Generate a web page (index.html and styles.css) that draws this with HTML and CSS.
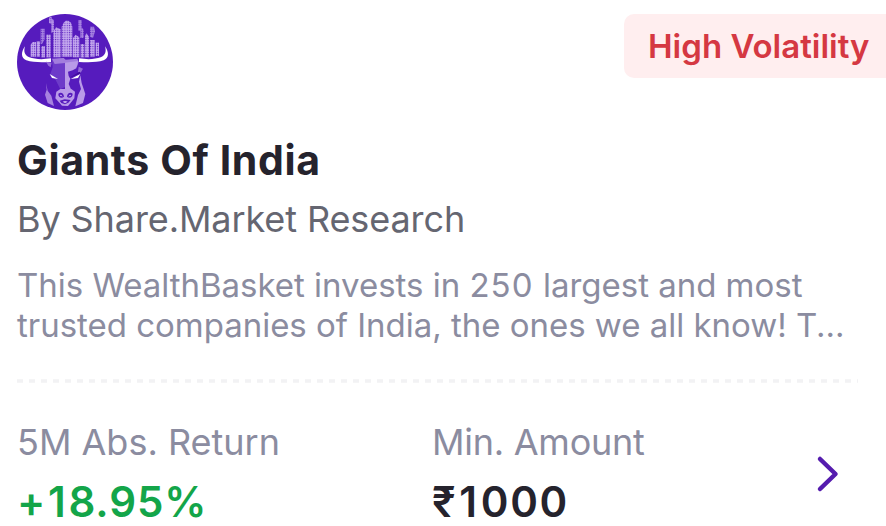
FILE: index.html
```html
<!DOCTYPE html>
<html lang="en">
<head>
<meta charset="utf-8">
<title>Giants Of India</title>
<link rel="stylesheet" href="styles.css">
</head>
<body>
<article class="card">
  <header class="top">
    <svg class="logo" viewBox="21 18 288 288" aria-hidden="true">
      <defs>
        <pattern id="windows" width="7" height="7" patternUnits="userSpaceOnUse">
          <rect width="7" height="7" fill="#c9aff1"/>
          <rect x="2" y="2" width="3.500" height="3.500" fill="#6b35c6"/>
        </pattern>
      </defs>
      <circle cx="165" cy="162" r="144" fill="#561bbd"/>
      <g fill="url(#windows)">
        <path d="M62 146v-36l6-8h10v44z"/>
        <path d="M80 146v-46h10v46z"/>
        <path d="M94 148v-34h11v34z"/>
        <path d="M92 62h12v32l-8 14h-4z" opacity=".75"/>
        <path d="M109 148V80h13v68z"/>
        <path d="M117 30l6-6 4 10 5 2v34l-8 6V48l-7-3z" opacity=".85"/>
        <path d="M130 148V70l8-12 14 6v84z"/>
        <path d="M155 146V56l6-12 6-6h8l8 6 4 12v90z"/>
        <path d="M189 148V90l8-10 11 8v60z"/>
        <path d="M205 36h10v22l6 8v24h-10V68h-6z" opacity=".75"/>
        <path d="M212 148v-40h11v40z"/>
        <path d="M225 148V84l4-8 8 10v62z"/>
        <path d="M240 56h12l3 14-6 20-9-4z" opacity=".75"/>
        <path d="M240 146V96h14v50z"/>
        <path d="M257 144v-40h10v40z"/>
      </g>
      <g fill="#fff">
        <path d="M45 115C32 133 33 151 49 157c20 7 49 6 74 5v-11c-25 4-49 3-65-3-14-6-18-17-13-33z"/>
        <path d="M285 115c13 18 12 36-4 42-20 7-49 6-74 5v-11c25 4 49 3 65-3 14-6 18-17 13-33z"/>
      </g>
      <path d="M126 154l34-3 5 4v82l-14 7-14-28-16-18 7-20z" fill="#6d3bc9"/>
      <path d="M126 152l35-2 6 5 35-3 4 9-5 15-34 2-2-13-31 3z" fill="#a27ddd"/>
      <path d="M165 164l39-5-5 22-11 6-14 4 2 13 5 8-5 16 7 16-18-1z" fill="#b99ae8"/>
      <path d="M108 161l17 3-3 14-7-5zM206 176l13 6-7 12-8-2z" fill="#9369d6"/>
      <path d="M119 198l25 15-18-3z" fill="#fff"/>
      <path d="M211 198l-29 15 22-3z" fill="#fff"/>
      <path d="M178 209l31-18 3 5-29 12z" fill="#3f0c9b"/>
      <path d="M108 225l5 23 11 15 8 31-19-9-8-25 5-15z" fill="#a681df"/>
      <path d="M211 202l4 23 11 33-7 27-23 10 8-34 9-18-6-22z" fill="#b99ae8"/>
      <path d="M139 251l12-8h33l11 8-2 20-12 15-7 8-18-1-7-8-13-14z" fill="#b99ae8"/>
      <path d="M145 257c8-6 16-1 17 9-7 7-18 2-17-9zM188 257c-8-6-16-1-17 9 7 7 17 2 17-9zM149 278l15-4 18 2-7 8-10 5-11-4z" fill="#561bbd"/>
      <path d="M158 281q7-4 15 0l-8 5z" fill="#c9aff1"/>
      <path d="M150 262q5-2 6 3M183 262q-5-2-6 3" fill="none" stroke="#c9aff1" stroke-width="3"/>
    </svg>
    <span class="badge">High Volatility</span>
  </header>
  <h1 class="title">Giants Of India</h1>
  <p class="author">By Share.Market Research</p>
  <p class="description">This WealthBasket invests in <span class="number">250</span> largest and most<br>trusted companies of India, the ones we all know! T...</p>
  <svg class="divider" viewBox="0 0 842 4" aria-hidden="true"><path d="M0 2H841"/></svg>
  <footer class="stats">
    <div class="stat">
      <span class="label">5M Abs. Return</span>
      <strong class="value gain"><span class="sign">+1</span>8.95%</strong>
    </div>
    <div class="stat">
      <span class="label minimum">Min. Amount</span>
      <strong class="value amount"><span class="currency">₹1</span>000</strong>
    </div>
    <svg class="chevron" viewBox="0 0 24 38" aria-hidden="true"><path d="M4 4L19.500 19L4 34"/></svg>
  </footer>
</article>
</body>
</html>
```
FILE: styles.css
```css
* { box-sizing: border-box; }
html, body { margin: 0; height: 100%; overflow: hidden; background: #fff; }
.card {
  height: 526px;
  overflow: hidden;
  padding: 14px 0 0 17px;
  font-family: Inter, "Liberation Sans", sans-serif;
}
.top { display: flex; justify-content: space-between; align-items: flex-start; height: 121px; }
.logo { width: 96px; height: 96px; }
.badge {
  width: 262px;
  height: 64px;
  padding-left: 24px;
  border-radius: 10px 0 0 10px;
  background: #ffeeef;
  color: #d53842;
  font-size: 33px;
  font-weight: 600;
  line-height: 64px;
  white-space: nowrap;
}
.title { margin: 0 0 12px; color: #25232d; font-size: 41px; font-weight: 700; line-height: 50px; letter-spacing: .65px; white-space: nowrap; }
.author { margin: 0 0 24px; color: #656671; font-size: 36px; line-height: 44px; letter-spacing: -.1px; white-space: nowrap; }
.description { margin: 0; color: #8b8ca0; font-size: 33px; line-height: 40px; letter-spacing: -.02px; white-space: nowrap; }
.number { letter-spacing: 1.1px; }
.divider { display: block; width: 842px; height: 4px; margin: 34px 0 37px; }
.divider path { fill: none; stroke: #f2f2f4; stroke-width: 3.500; stroke-dasharray: 6 6; }
.stats { display: grid; grid-template-columns: 415px 384px 24px; }
.stat { display: flex; flex-direction: column; gap: 13px; white-space: nowrap; }
.label { color: #8b8ca0; font-size: 36px; line-height: 44px; }
.minimum { letter-spacing: -.25px; }
.value { font-size: 42px; font-weight: 600; line-height: 50px; }
.gain { color: #13a549; letter-spacing: .9px; }
.sign { letter-spacing: 2.7px; }
.amount { color: #25232d; letter-spacing: 1.7px; }
.currency { letter-spacing: 3.7px; }
.chevron { width: 24px; height: 38px; margin-top: 35px; }
.chevron path { fill: none; stroke: #551cae; stroke-width: 4.500; stroke-linecap: round; stroke-linejoin: round; }
```
